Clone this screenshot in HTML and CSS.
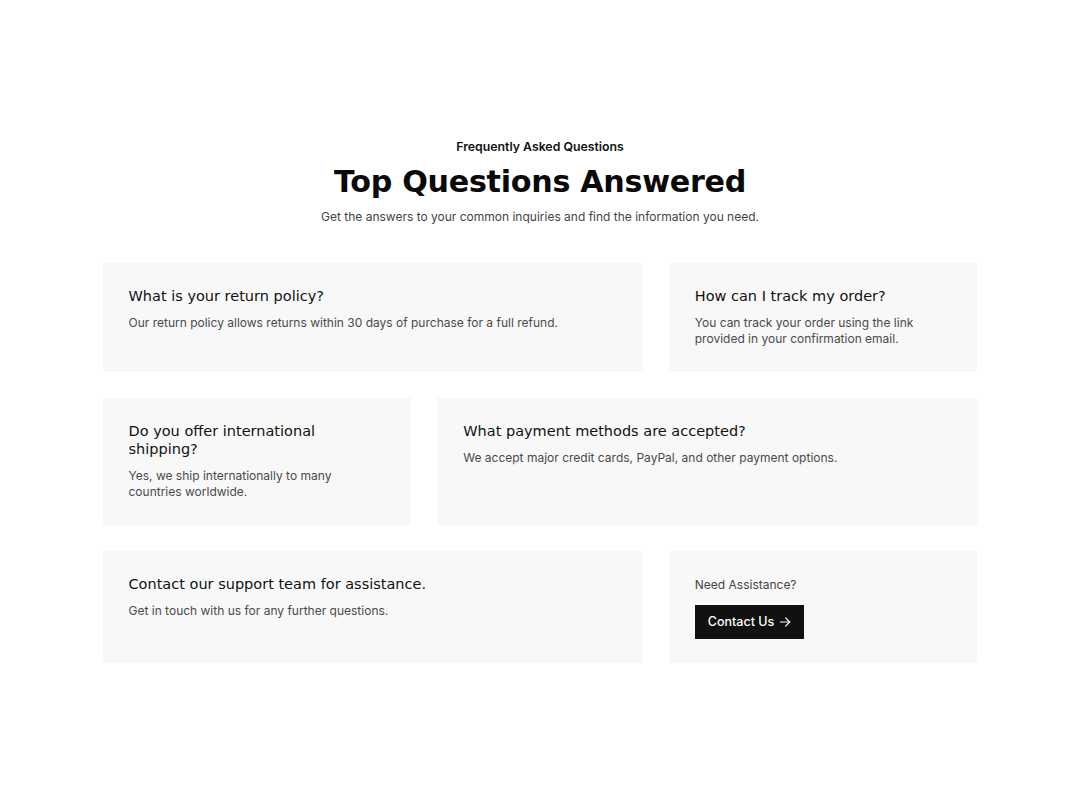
FILE: index.html
```html
<!DOCTYPE html>
<html lang="en">
<head>
<meta charset="utf-8">
<title>FAQ</title>
<link rel="stylesheet" href="styles.css">
</head>
<body>
<main class="page">
  <section class="faq">
    <header class="faq-head">
      <p class="eyebrow">Frequently Asked Questions</p>
      <h1 class="title">Top Questions Answered</h1>
      <p class="lead">Get the answers to your common inquiries and find the information you need.</p>
    </header>
    <div class="row row-wide-left">
      <article class="card">
        <h3 class="card-title">What is your return policy?</h3>
        <p class="card-text">Our return policy allows returns within 30 days of purchase for a full refund.</p>
      </article>
      <article class="card">
        <h3 class="card-title">How can I track my order?</h3>
        <p class="card-text">You can track your order using the link provided in your confirmation email.</p>
      </article>
    </div>
    <div class="row row-wide-right">
      <article class="card">
        <h3 class="card-title narrow">Do you offer international shipping?</h3>
        <p class="card-text narrow">Yes, we ship internationally to many countries worldwide.</p>
      </article>
      <article class="card">
        <h3 class="card-title">What payment methods are accepted?</h3>
        <p class="card-text">We accept major credit cards, PayPal, and other payment options.</p>
      </article>
    </div>
    <div class="row row-wide-left">
      <article class="card">
        <h3 class="card-title">Contact our support team for assistance.</h3>
        <p class="card-text">Get in touch with us for any further questions.</p>
      </article>
      <article class="card">
        <p class="need">Need Assistance?</p>
        <a class="btn" href="#">Contact Us
          <svg class="btn-icon" width="14" height="14" viewBox="0 0 24 24" fill="none" stroke="currentColor" stroke-width="2" stroke-linecap="round" stroke-linejoin="round"><path d="M4 12h16"/><path d="M13 5l7 7-7 7"/></svg>
        </a>
      </article>
    </div>
  </section>
</main>
</body>
</html>
```

FILE: styles.css
```css
* { box-sizing: border-box; }
html, body { margin: 0; padding: 0; background: #fff; }
body {
  font-family: Inter, "Liberation Sans", sans-serif;
  color: #111;
  -webkit-font-smoothing: antialiased;
}
.page {
  min-height: 801px;
  display: flex;
  align-items: center;
  justify-content: center;
}
.faq {
  width: 875px;
  display: flex;
  flex-direction: column;
  gap: 26px;
}
.faq-head {
  text-align: center;
  margin-bottom: 11px;
}
.eyebrow {
  margin: 0;
  font-size: 12.3px;
  font-weight: 600;
  line-height: 16px;
  color: #111;
}
.title {
  margin: 7px 0 0;
  font-family: "DejaVu Sans", Inter, sans-serif;
  font-size: 30.2px;
  font-weight: 700;
  line-height: 40px;
  letter-spacing: -0.3px;
  color: #0a0a0a;
}
.lead {
  margin: 6px 0 0;
  font-size: 12px;
  line-height: 18px;
  color: #444;
}
.row {
  display: grid;
  gap: 26px;
}
.row-wide-left { grid-template-columns: 7fr 4fr; }
.row-wide-right { grid-template-columns: 4fr 7fr; }
.card {
  background: #f8f8f9;
  padding: 24px 26px;
}
.card-title {
  margin: 0;
  font-family: "DejaVu Sans", Inter, sans-serif;
  font-size: 14.5px;
  font-weight: 500;
  line-height: 18px;
  color: #111;
}
.card-text {
  margin: 10px 0 0;
  font-size: 12px;
  line-height: 16.5px;
  color: #4a4a4a;
}
.narrow { max-width: 240px; }
.need {
  margin: 0;
  font-size: 12px;
  line-height: 20px;
  color: #444;
}
.btn {
  margin-top: 10px;
  display: inline-flex;
  align-items: center;
  gap: 4px;
  height: 34px;
  padding: 0 12px 0 13px;
  background: #111;
  color: #fff;
  font-size: 12.5px;
  font-weight: 500;
  text-decoration: none;
}
.btn-icon { display: block; }
```
